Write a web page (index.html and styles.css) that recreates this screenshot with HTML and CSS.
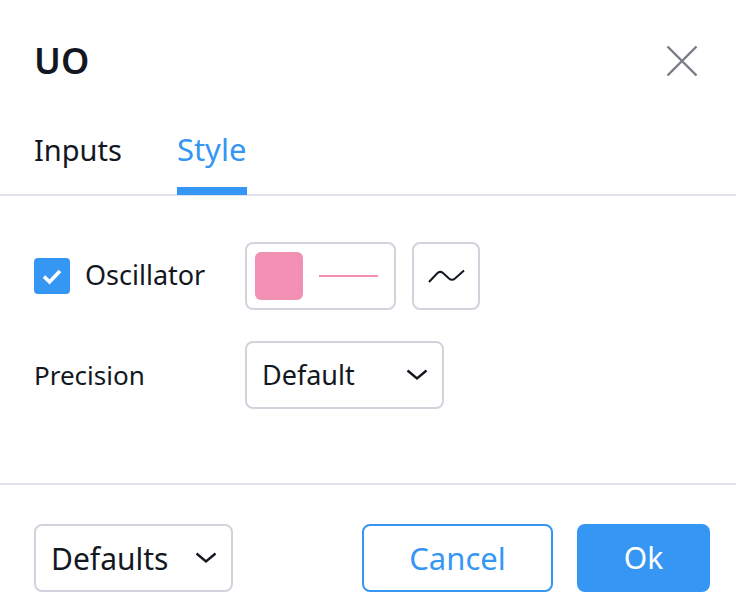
FILE: index.html
```html
<!DOCTYPE html>
<html>
<head>
<link rel="stylesheet" href="styles.css">
</head>
<body>

<div class="dialog">
  <div class="header">
    <div class="title">UO</div>
    <svg class="close" width="32" height="32" viewBox="0 0 32 32"><path d="M1.500 1.500l29 29M30.500 1.500l-29 29" stroke="#787b86" stroke-width="2.400" fill="none"/></svg>
  </div>

  <div class="tabs">
    <a class="tab">Inputs</a>
    <a class="tab active">Style</a>
  </div>

  <div class="content">
    <div class="row row-first">
      <div class="label">
        <span class="checkbox">
          <svg width="36" height="36" viewBox="0 0 36 36"><path d="M10 18.500l5.500 5.500 10.500-11" stroke="#fff" stroke-width="3.600" fill="none"/></svg>
        </span>
        <span class="check-text">Oscillator</span>
      </div>
      <div class="box color-box">
        <span class="swatch"></span>
        <span class="line"></span>
      </div>
      <div class="box plot-box">
        <svg width="38" height="16" viewBox="0 0 38 16"><path d="M2 14l8-8.500q3-3 6-.5l6 5.500q3 2.500 6 0l9-8" stroke="#131722" stroke-width="2" fill="none"/></svg>
      </div>
    </div>
    <div class="row">
      <div class="label precision-label">Precision</div>
      <div class="box select">
        <span class="select-text">Default</span>
        <svg class="chevron" width="22" height="12" viewBox="0 0 22 12"><path d="M1.500 1.500l9.500 8 9.500-8" stroke="#131722" stroke-width="2.400" fill="none"/></svg>
      </div>
    </div>
  </div>

  <div class="footer">
    <div class="box select">
      <span class="defaults-text">Defaults</span>
      <svg class="chevron" width="22" height="12" viewBox="0 0 22 12"><path d="M1.500 1.500l9.500 8 9.500-8" stroke="#131722" stroke-width="2.400" fill="none"/></svg>
    </div>
    <div class="buttons">
      <div class="btn cancel">Cancel</div>
      <div class="btn ok">Ok</div>
    </div>
  </div>
</div>

</body>
</html>
```

FILE: styles.css
```css
* {
  box-sizing: border-box;
}

body {
  margin: 0;
  background-color: #fff;
  color: #131722;
  font-family: "Noto Sans", "Open Sans", sans-serif;
  font-size: 27px;
}

.dialog {
  width: 736px;
  height: 612px;
  overflow: hidden;
}

.header {
  height: 122px;
  padding: 45px 38px 0 34px;
  display: flex;
  justify-content: space-between;
  align-items: flex-start;
}

.title {
  font-size: 36px;
  font-weight: 600;
  line-height: 32px;
}

.tabs {
  height: 74px;
  padding-left: 34px;
  display: flex;
  gap: 55px;
  border-bottom: 2px solid #e0e3eb;
}

.tab {
  height: 73px;
  line-height: 55px;
  font-size: 29px;
}

.tab.active {
  width: 70px;
  font-size: 31px;
  color: #3596f3;
  border-bottom: 8px solid #3596f3;
}

.content {
  height: 289px;
  padding: 46px 34px 0;
  border-bottom: 2px solid #e0e3eb;
}

.row {
  display: flex;
  align-items: center;
  height: 68px;
}

.row-first {
  margin-bottom: 31px;
}

.label {
  width: 211px;
  display: flex;
  align-items: center;
}

.checkbox {
  width: 36px;
  height: 36px;
  border-radius: 4px;
  background-color: #3596f3;
  display: block;
}

.checkbox svg {
  display: block;
}

.check-text {
  margin-left: 15px;
  line-height: 32px;
  margin-bottom: 2px;
}

.precision-label {
  font-size: 26px;
  margin-bottom: 1px;
}

.box {
  height: 68px;
  border: 2px solid #d1d4dc;
  border-radius: 8px;
  display: flex;
  align-items: center;
}

.color-box {
  width: 151px;
  padding-left: 8px;
}

.swatch {
  width: 48px;
  height: 48px;
  border-radius: 6px;
  background-color: #f190b2;
}

.line {
  width: 59px;
  height: 2px;
  margin-left: 16px;
  background-color: #f190b2;
}

.plot-box {
  width: 68px;
  margin-left: 16px;
  justify-content: center;
}

.select {
  justify-content: space-between;
  padding: 0 14px 0 15px;
  width: 199px;
}

.select-text {
  margin-bottom: 1px;
}

.defaults-text {
  font-size: 30px;
}

.footer {
  padding: 39px 26px 0 34px;
  display: flex;
  justify-content: space-between;
}

.buttons {
  display: flex;
  gap: 24px;
}

.btn {
  height: 68px;
  border-radius: 8px;
  text-align: center;
  line-height: 64px;
  font-size: 31px;
}

.cancel {
  width: 191px;
  border: 2px solid #3596f3;
  color: #3596f3;
}

.ok {
  width: 133px;
  background-color: #3596f3;
  color: #fff;
  font-size: 30px;
  line-height: 68px;
}
```
